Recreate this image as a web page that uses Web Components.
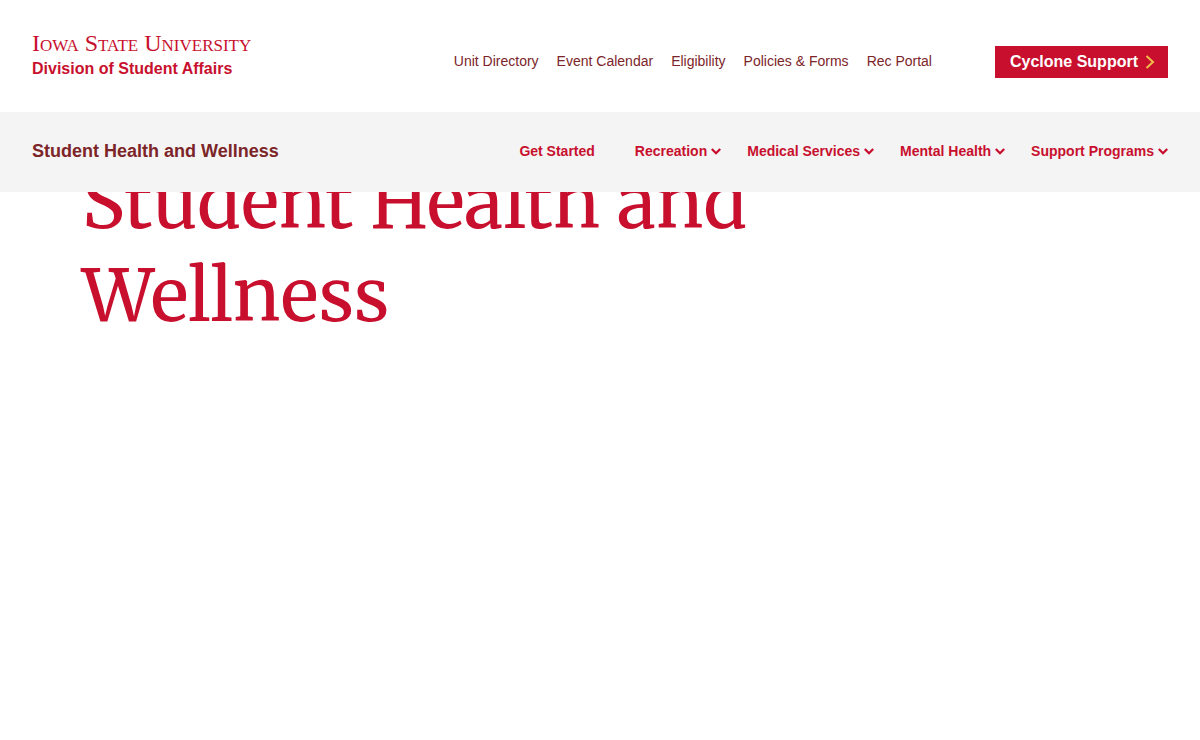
<!DOCTYPE html>
<html lang="en">
<head>
<meta charset="utf-8">
<meta name="viewport" content="width=device-width, initial-scale=1">
<title>Student Health and Wellness</title>
<style>
  body { margin: 0; background: #fff; font-family: "Liberation Sans", Arial, sans-serif; color: #7c2529; }
</style>
</head>
<body>
<site-header>
  <utility-bar slot="top"></utility-bar>
  <unit-bar slot="bottom">
    <nav-item>Get Started</nav-item>
    <nav-item menu>Recreation</nav-item>
    <nav-item menu>Medical Services</nav-item>
    <nav-item menu>Mental Health</nav-item>
    <nav-item menu>Support Programs</nav-item>
  </unit-bar>
</site-header>
<page-hero>Student Health and Wellness</page-hero>

<script>
  const define = (name, html, setup) => {
    const template = document.createElement('template');
    template.innerHTML = html;
    customElements.define(name, class extends HTMLElement {
      constructor() {
        super();
        this.attachShadow({ mode: 'open' }).append(template.content.cloneNode(true));
        if (setup) setup(this);
      }
    });
  };

  // Fixed header: the page scrolls underneath it
  define('site-header', `
    <style>
      :host { display: block; position: fixed; top: 0; left: 0; right: 0; z-index: 10; }
    </style>
    <header><slot name="top"></slot><slot name="bottom"></slot></header>`);

  define('isu-wordmark', `
    <style>
      :host { display: block; }
      a { display: grid; gap: 2px; color: #c8102e; text-decoration: none; }
      .university { font: 24px/24px "Liberation Serif", "Times New Roman", serif; font-variant: small-caps; }
      .division { font-size: 16px; line-height: 24px; font-weight: bold; }
    </style>
    <a href="#"><span class="university">Iowa State University</span><span class="division">Division of Student Affairs</span></a>`);

  define('cta-link', `
    <style>
      :host { display: block; }
      a { display: flex; align-items: center; gap: 7px; padding: 0 13px 0 15px; font-size: 16px; line-height: 32px;
          font-weight: bold; color: #fff; background: #c8102e; text-decoration: none; }
      svg { display: block; }
    </style>
    <a href="#"><slot></slot><svg width="10" height="14" viewBox="0 0 10 14" fill="none" stroke="#f1be48" stroke-width="2" aria-hidden="true"><path d="M1.5 1 8 7 1.5 13"/></svg></a>`);

  define('utility-bar', `
    <style>
      :host { display: flex; justify-content: space-between; align-items: center; min-height: 112px;
              padding: 0 32px; box-sizing: border-box; background: #fff; }
      .side { display: flex; align-items: center; gap: 63px; padding-top: 12px; }
      nav { display: flex; gap: 18px; padding-bottom: 2px; }
      nav a { font-size: 14px; line-height: 20px; color: #7c2529; text-decoration: none; white-space: nowrap; }
    </style>
    <isu-wordmark></isu-wordmark>
    <div class="side">
      <nav aria-label="Utility">
        <a href="#">Unit Directory</a><a href="#">Event Calendar</a><a href="#">Eligibility</a><a href="#">Policies &amp; Forms</a><a href="#">Rec Portal</a>
      </nav>
      <cta-link>Cyclone Support</cta-link>
    </div>`);

  define('unit-bar', `
    <style>
      :host { display: flex; justify-content: space-between; align-items: center; min-height: 80px;
              padding: 0 32px 2px; box-sizing: border-box; background: #f4f4f4; }
      .title { font-size: 18px; line-height: 24px; font-weight: bold; color: #7c2529; text-decoration: none; }
      nav { display: flex; gap: 26px; }
    </style>
    <a class="title" href="#">Student Health and Wellness</a>
    <nav aria-label="Main"><slot></slot></nav>`);

  define('nav-item', `
    <style>
      :host { display: block; }
      a, button { display: flex; align-items: center; gap: 4px; padding: 0; border: 0; background: none;
          font: bold 14px/20px "Liberation Sans", Arial, sans-serif; color: #c8102e; text-decoration: none; white-space: nowrap; }
      a { padding-right: 14px; }
      svg { display: block; }
    </style>
    <a href="#"></a>
    <button type="button" aria-haspopup="true" aria-expanded="false"><span></span><svg width="10" height="7" viewBox="0 0 10 7" fill="none" stroke="#c8102e" stroke-width="2.3" aria-hidden="true"><path d="M.8 1 5 5.2 9.2 1"/></svg></button>`,
    el => {
      const menu = el.hasAttribute('menu');
      el.shadowRoot.querySelector(menu ? 'a' : 'button').remove();
      el.shadowRoot.querySelector(menu ? 'span' : 'a').textContent = el.textContent.trim();
    });

  define('page-hero', `
    <style>
      :host { display: block; padding: 156px 82px 0; }
      h1 { max-width: 720px; margin: 0; font: 400 72px/93px Merriweather, "DejaVu Serif", serif; color: #c8102e; }
    </style>
    <main><h1><slot></slot></h1></main>`);
</script>
</body>
</html>
